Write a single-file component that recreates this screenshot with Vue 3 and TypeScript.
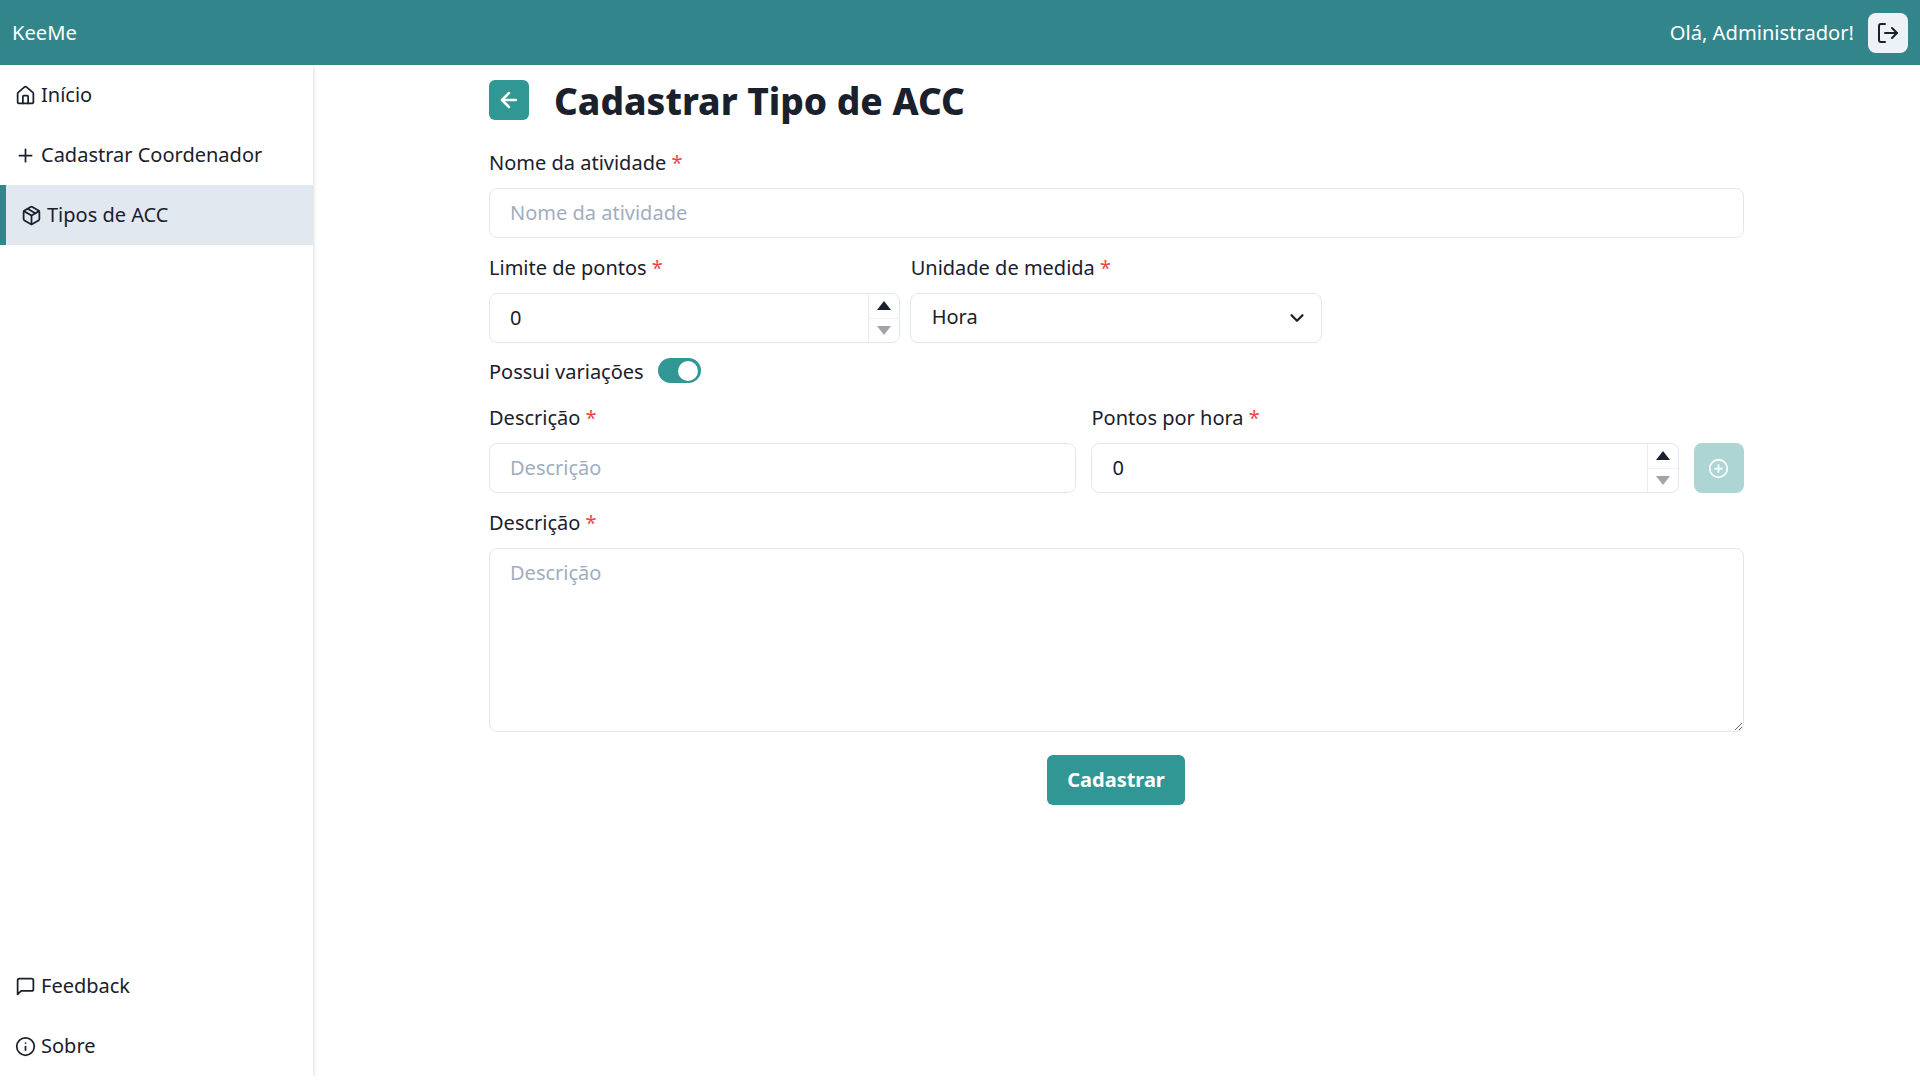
<script setup lang="ts">
import { ref } from 'vue'

const temVariacoes = ref<boolean>(true)
const unidade = ref<string>('Hora')
const limite = ref<number>(0)
const pontos = ref<number>(0)
</script>

<template>
  <div class="layout">
    <header class="topbar">
      <span class="brand">KeeMe</span>
      <div class="user">
        <span class="greeting">Olá, Administrador!</span>
        <button class="logout" type="button" aria-label="Sair">
          <svg class="icon" viewBox="0 0 24 24">
            <path d="M9 21H5a2 2 0 0 1-2-2V5a2 2 0 0 1 2-2h4" />
            <path d="M16 17l5-5-5-5" />
            <path d="M21 12H9" />
          </svg>
        </button>
      </div>
    </header>

    <div class="body">
      <aside class="sidebar">
        <nav class="nav">
          <a class="nav-item">
            <svg class="icon" viewBox="0 0 24 24">
              <path d="M15 21v-8a1 1 0 0 0-1-1h-4a1 1 0 0 0-1 1v8" />
              <path d="M3 10a2 2 0 0 1 .709-1.528l7-5.999a2 2 0 0 1 2.582 0l7 5.999A2 2 0 0 1 21 10v9a2 2 0 0 1-2 2H5a2 2 0 0 1-2-2z" />
            </svg>
            <span class="nav-label">Início</span>
          </a>
          <a class="nav-item">
            <svg class="icon" viewBox="0 0 24 24">
              <path d="M5 12h14" />
              <path d="M12 5v14" />
            </svg>
            <span class="nav-label">Cadastrar Coordenador</span>
          </a>
          <a class="nav-item active">
            <svg class="icon" viewBox="0 0 24 24">
              <path d="M11 21.73a2 2 0 0 0 2 0l7-4A2 2 0 0 0 21 16V8a2 2 0 0 0-1-1.73l-7-4a2 2 0 0 0-2 0l-7 4A2 2 0 0 0 3 8v8a2 2 0 0 0 1 1.73z" />
              <path d="M12 22V12" />
              <path d="m3.3 7 8.7 5 8.7-5" />
              <path d="m7.5 4.27 9 5.15" />
            </svg>
            <span class="nav-label">Tipos de ACC</span>
          </a>
        </nav>
        <nav class="nav">
          <a class="nav-item">
            <svg class="icon" viewBox="0 0 24 24">
              <path d="M21 15a2 2 0 0 1-2 2H7l-4 4V5a2 2 0 0 1 2-2h14a2 2 0 0 1 2 2z" />
            </svg>
            <span class="nav-label">Feedback</span>
          </a>
          <a class="nav-item">
            <svg class="icon" viewBox="0 0 24 24">
              <circle cx="12" cy="12" r="10" />
              <path d="M12 16v-4" />
              <path d="M12 8h.01" />
            </svg>
            <span class="nav-label">Sobre</span>
          </a>
        </nav>
      </aside>

      <main class="content">
        <div class="page">
          <div class="page-head">
            <button class="back" type="button" aria-label="Voltar">
              <svg class="icon" viewBox="0 0 24 24">
                <path d="m12 19-7-7 7-7" />
                <path d="M19 12H5" />
              </svg>
            </button>
            <h1>Cadastrar Tipo de ACC</h1>
          </div>

          <form class="form" @submit.prevent>
            <div class="field">
              <label>Nome da atividade <em>*</em></label>
              <input class="control" type="text" placeholder="Nome da atividade" />
            </div>

            <div class="grid-3">
              <div class="field">
                <label>Limite de pontos <em>*</em></label>
                <div class="number">
                  <input class="control" type="number" v-model="limite" />
                  <div class="spin">
                    <span class="spin-btn"><i class="up"></i></span>
                    <span class="spin-btn"><i class="down"></i></span>
                  </div>
                </div>
              </div>
              <div class="field">
                <label>Unidade de medida <em>*</em></label>
                <div class="select">
                  <select class="control" v-model="unidade">
                    <option>Hora</option>
                    <option>Dia</option>
                  </select>
                  <svg class="chevron" viewBox="0 0 24 24">
                    <path d="m6 9 6 6 6-6" />
                  </svg>
                </div>
              </div>
            </div>

            <div class="toggle-row">
              <span class="toggle-label">Possui variações</span>
              <button
                class="toggle"
                :class="{ on: temVariacoes }"
                type="button"
                aria-label="Possui variações"
                @click="temVariacoes = !temVariacoes"
              >
                <span class="knob"></span>
              </button>
            </div>

            <div class="variation">
              <div class="field grow">
                <label>Descrição <em>*</em></label>
                <input class="control" type="text" placeholder="Descrição" />
              </div>
              <div class="field grow">
                <label>Pontos por hora <em>*</em></label>
                <div class="number">
                  <input class="control" type="number" v-model="pontos" />
                  <div class="spin">
                    <span class="spin-btn"><i class="up"></i></span>
                    <span class="spin-btn"><i class="down"></i></span>
                  </div>
                </div>
              </div>
              <button class="add" type="button" disabled aria-label="Adicionar">
                <svg class="icon" viewBox="0 0 24 24">
                  <circle cx="12" cy="12" r="10" />
                  <path d="M8 12h8" />
                  <path d="M12 8v8" />
                </svg>
              </button>
            </div>

            <div class="field">
              <label>Descrição <em>*</em></label>
              <textarea class="control area" placeholder="Descrição"></textarea>
            </div>

            <div class="actions">
              <button class="submit" type="submit">Cadastrar</button>
            </div>
          </form>
        </div>
      </main>
    </div>
  </div>
</template>

<style>
html,
body {
  margin: 0;
  background: #ffffff;
}
</style>

<style scoped>
.layout {
  display: flex;
  flex-direction: column;
  height: calc(100vh - 4px);
  font-family: "Noto Sans", "Open Sans", sans-serif;
  font-size: 20px;
  color: #1a202c;
}

.topbar {
  flex: 0 0 65px;
  position: relative;
  z-index: 1;
  display: flex;
  align-items: center;
  justify-content: space-between;
  padding: 0 12px;
  background: #32868b;
  color: #ffffff;
  font-size: 20.15px;
}

.brand,
.greeting {
  padding-bottom: 2px;
}

.user {
  display: flex;
  align-items: center;
  gap: 14px;
}

.logout {
  display: flex;
  align-items: center;
  justify-content: center;
  width: 40px;
  height: 40px;
  padding: 0;
  border: none;
  border-radius: 8px;
  background: #edf2f7;
  color: #1a202c;
}

.icon {
  width: 21px;
  height: 21px;
  flex-shrink: 0;
  fill: none;
  stroke: currentColor;
  stroke-width: 2;
  stroke-linecap: round;
  stroke-linejoin: round;
}

.logout .icon {
  width: 24px;
  height: 24px;
}

.body {
  flex: 1;
  display: flex;
  min-height: 0;
}

.sidebar {
  flex: 0 0 313px;
  display: flex;
  flex-direction: column;
  justify-content: space-between;
  background: #ffffff;
  box-shadow: 0 3px 5px rgba(0, 0, 0, 0.12), 1px 0 3px rgba(0, 0, 0, 0.05);
}

.nav-item {
  display: flex;
  align-items: center;
  gap: 5.5px;
  height: 60px;
  padding-left: 14.5px;
  box-sizing: border-box;
}

.nav-label {
  padding-bottom: 2px;
}

.nav-item.active {
  border-left: 6px solid #32868b;
  background: #e2e8f0;
}

.content {
  flex: 1;
  display: flex;
  justify-content: center;
  min-width: 0;
  margin-left: -1px;
}

.page {
  width: 1255px;
  padding-top: 15px;
}

.page-head {
  display: flex;
  align-items: center;
  gap: 25.5px;
  height: 40px;
  margin-bottom: 28px;
}

.back {
  display: flex;
  align-items: center;
  justify-content: center;
  width: 40px;
  height: 40px;
  padding: 0;
  border: none;
  border-radius: 6px;
  background: #319795;
  color: #ffffff;
}

.back .icon {
  width: 24px;
  height: 24px;
  stroke-width: 2.5;
}

.page-head h1 {
  margin: 0;
  padding-top: 2px;
  font-size: 37px;
  font-weight: 800;
  line-height: 40px;
}

.form {
  display: flex;
  flex-direction: column;
  gap: 15px;
}

.field {
  display: flex;
  flex-direction: column;
  gap: 10px;
  min-width: 0;
}

.field label {
  padding-left: 0.5px;
  line-height: 30px;
}

.field em {
  font-style: normal;
  color: #ef4444;
}

.control {
  width: 100%;
  height: 50px;
  padding: 0 20.5px 2px;
  box-sizing: border-box;
  border: 1px solid #e2e8f0;
  border-radius: 8px;
  outline: none;
  background: #ffffff;
  font: inherit;
  color: inherit;
}

.control::placeholder {
  color: #a0aec0;
  opacity: 1;
}

.area {
  display: block;
  height: 184px;
  padding: 10px 20.5px;
  resize: vertical;
}

.grid-3 {
  display: grid;
  grid-template-columns: repeat(3, 1fr);
  gap: 10px;
}

.number,
.select {
  position: relative;
}

.number input {
  appearance: textfield;
  -moz-appearance: textfield;
}

.number input::-webkit-outer-spin-button,
.number input::-webkit-inner-spin-button {
  -webkit-appearance: none;
  margin: 0;
}

.spin {
  position: absolute;
  top: 1px;
  right: 1px;
  bottom: 1px;
  width: 30px;
  display: flex;
  flex-direction: column;
  border-left: 1px solid #e8ecf2;
}

.spin-btn {
  flex: 1;
  display: flex;
  align-items: center;
  justify-content: center;
}

.spin-btn + .spin-btn {
  border-top: 1px solid #edf0f5;
}

.spin-btn i {
  width: 0;
  height: 0;
  border-left: 7px solid transparent;
  border-right: 7px solid transparent;
}

.spin-btn .up {
  border-bottom: 9px solid #1a202c;
}

.spin-btn .down {
  border-top: 9px solid #a3a3ab;
}

.select select {
  appearance: none;
  -webkit-appearance: none;
  padding-bottom: 3px;
}

.chevron {
  position: absolute;
  top: 14px;
  right: 14px;
  width: 22px;
  height: 22px;
  fill: none;
  stroke: #1a202c;
  stroke-width: 2.5;
  stroke-linecap: round;
  stroke-linejoin: round;
  pointer-events: none;
}

.toggle-row {
  display: flex;
  align-items: center;
  gap: 14.5px;
  height: 25px;
  margin-bottom: 5px;
  padding-left: 0.5px;
}

.toggle-label {
  padding-top: 2px;
}

.toggle {
  display: flex;
  align-items: center;
  width: 43px;
  height: 25px;
  padding: 0 3px;
  border: none;
  border-radius: 13px;
  background: #cbd5e0;
}

.toggle.on {
  justify-content: flex-end;
  background: #319795;
}

.knob {
  width: 20px;
  height: 20px;
  border-radius: 50%;
  background: #ffffff;
}

.variation {
  display: flex;
  align-items: flex-end;
  gap: 15px;
}

.grow {
  flex: 1;
}

.add {
  flex: 0 0 50px;
  display: flex;
  align-items: center;
  justify-content: center;
  height: 50px;
  padding: 0;
  border: none;
  border-radius: 8px;
  background: #319795;
  color: #ffffff;
  opacity: 0.4;
}

.actions {
  display: flex;
  justify-content: center;
  margin-top: 8px;
}

.submit {
  width: 138px;
  height: 50px;
  padding: 0 0 2px;
  border: none;
  border-radius: 6px;
  background: #319795;
  color: #ffffff;
  font: inherit;
  font-size: 20px;
  font-weight: 700;
}
</style>
